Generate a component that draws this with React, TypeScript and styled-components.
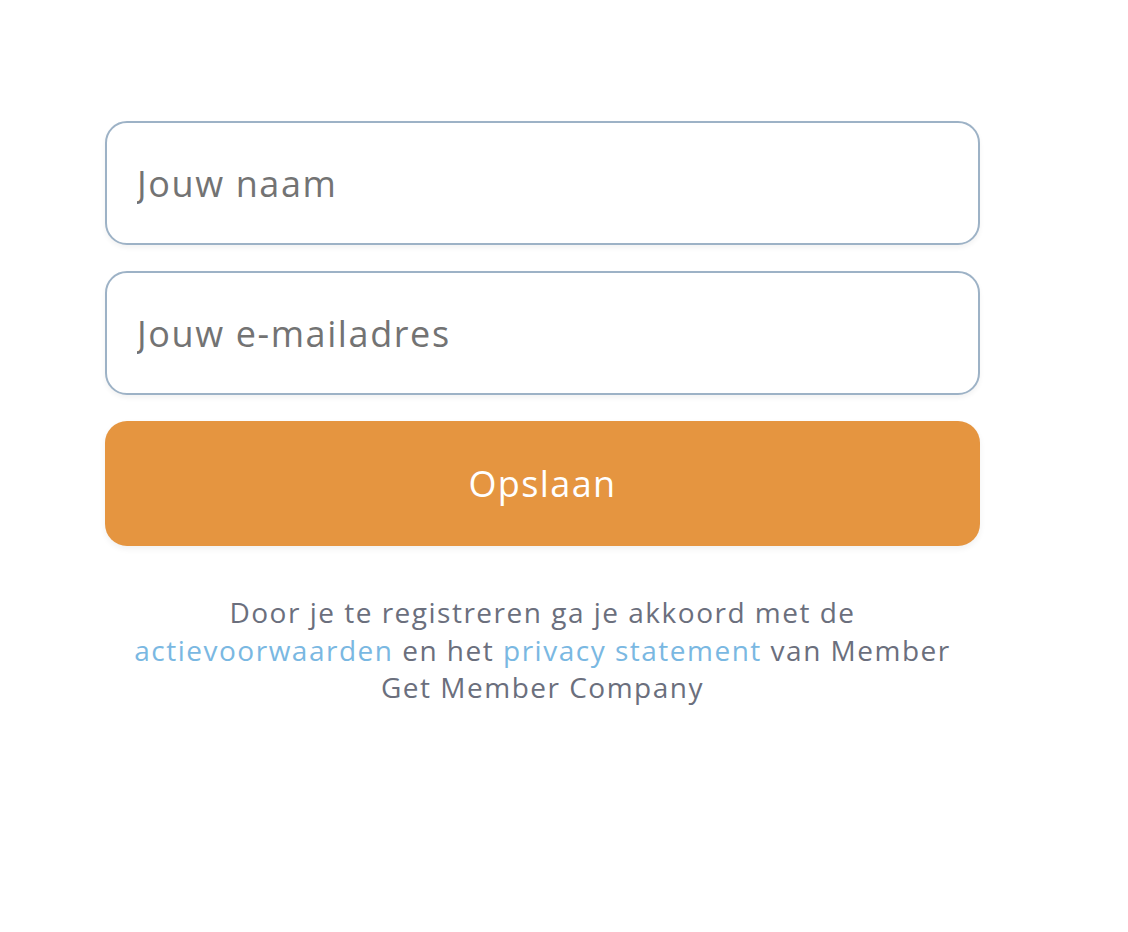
import React from "react";
import styled, { createGlobalStyle } from "styled-components";

const GlobalStyle = createGlobalStyle`
  html, body {
    margin: 0;
    padding: 0;
    background: #ffffff;
    font-family: "Open Sans", "Noto Sans", sans-serif;
  }
`;

const Page = styled.div`
  padding: 121px 0 0 105px;
`;

const Form = styled.form`
  width: 875px;
  display: flex;
  flex-direction: column;
`;

const Field = styled.input`
  box-sizing: border-box;
  width: 100%;
  height: 124px;
  margin-bottom: 26px;
  padding: 0 30px;
  border: 2px solid #9db2c6;
  border-radius: 22px;
  background: #fff;
  box-shadow: 0 3px 5px rgba(0, 0, 0, 0.05);
  font-family: inherit;
  font-size: 36px;
  letter-spacing: 1.6px;
  color: #333;
  outline: none;

  &::placeholder {
    color: #737373;
  }
`;

const SaveButton = styled.button`
  box-sizing: border-box;
  width: 100%;
  height: 125px;
  border: none;
  border-radius: 22px;
  background: #e59540;
  box-shadow: 0 3px 6px rgba(0, 0, 0, 0.06);
  color: #fff;
  font-family: inherit;
  font-size: 36px;
  letter-spacing: 1.4px;
  cursor: pointer;
`;

const Terms = styled.p`
  margin: 48px 0 0;
  padding: 0 18px;
  text-align: center;
  font-size: 28px;
  letter-spacing: 1.5px;
  line-height: 37.5px;
  color: #6b6f7d;
`;

const TermsLink = styled.a`
  color: #7ab8e2;
  text-decoration: none;
`;

export default function App() {
  return (
    <>
      <GlobalStyle />
      <Page>
        <Form onSubmit={(e) => e.preventDefault()}>
          <Field type="text" placeholder="Jouw naam" />
          <Field type="email" placeholder="Jouw e-mailadres" />
          <SaveButton type="submit">Opslaan</SaveButton>
          <Terms>
            Door je te registreren ga je akkoord met de{" "}
            <TermsLink href="#">actievoorwaarden</TermsLink> en het{" "}
            <TermsLink href="#">privacy statement</TermsLink> van Member Get
            Member Company
          </Terms>
        </Form>
      </Page>
    </>
  );
}
